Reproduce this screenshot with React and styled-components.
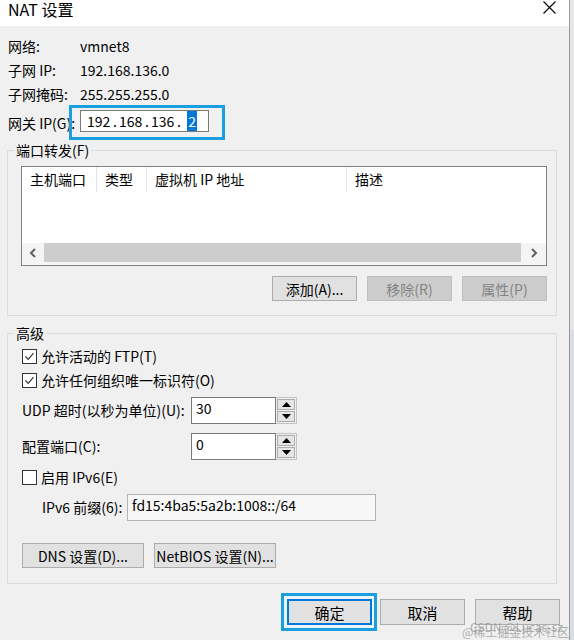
import React from "react";
import styled, { createGlobalStyle } from "styled-components";

const GlobalStyle = createGlobalStyle`
  * { box-sizing: border-box; }
  html, body { margin: 0; padding: 0; background: #f0f0f0; }
  body {
    font-family: "Noto Sans CJK SC", "Noto Sans", sans-serif;
    font-size: 14px;
    color: #000;
  }
`;

const Screen = styled.div`
  position: relative;
  display: flex;
  width: 574px;
  height: 640px;
  overflow: hidden;
`;

const Dialog = styled.div`
  width: 569px;
  height: 640px;
  background: #f0f0f0;
  display: flex;
  flex-direction: column;
`;

const Edge = styled.div`
  width: 1px;
  background: #9a9a9a;
`;

const Backdrop = styled.div`
  flex: 1;
  background: linear-gradient(#e6e6e6 0 330px, #dadde2 330px 640px);
`;

const TitleBar = styled.div`
  height: 26px;
  background: #fff;
  display: flex;
  align-items: flex-start;
  justify-content: space-between;
  padding: 1px 13px 0 8px;
`;

const Title = styled.div`
  font-size: 16px;
  line-height: 18px;
  margin-top: -1px;
`;

const Body = styled.div`
  padding: 8px 0 0 7px;
  display: flex;
  flex-direction: column;
`;

const InfoRow = styled.div`
  display: flex;
  align-items: center;
  height: ${(p) => p.$h || "24px"};
  padding-left: 1px;
  margin-top: ${(p) => p.$mt || "0"};
`;

const Label = styled.span`
  width: ${(p) => p.$w || "72px"};
  flex-shrink: 0;
  white-space: nowrap;
`;

const Highlight = styled.span`
  display: inline-flex;
  border: 3px solid #1a9fe0;
  padding: ${(p) => p.$pad};
  background: ${(p) => p.$bg || "transparent"};
  margin-right: ${(p) => p.$mr || "0"};
`;

const IpInput = styled.div`
  width: 129px;
  height: 22px;
  background: #fff;
  border: 1px solid #7a7a7a;
  display: flex;
  align-items: center;
  padding-left: 6px;
  font-size: 14px;
`;

const IpField = styled.span`
  width: ${(p) => p.$w || "22px"};
  text-align: ${(p) => p.$align || "left"};
`;

const IpDot = styled.span`
  width: 10px;
  padding-left: 4px;
`;

const Selected = styled.span`
  background: #0078d7;
  color: #fff;
  padding: 0 1px;
`;

const Group = styled.fieldset`
  margin: ${(p) => p.$mt || "0"} 0 0 0;
  padding: 0;
  width: 550px;
  min-width: 0;
  border: 1px solid #dcdcdc;
`;

const Legend = styled.legend`
  margin-left: 6px;
  padding: 0 2px;
  line-height: 18px;
`;

const GroupBody = styled.div`
  padding: ${(p) => p.$pad};
  display: flex;
  flex-direction: column;
`;

const ListBox = styled.div`
  width: 526px;
  height: 100px;
  background: #fff;
  border: 1px solid #828282;
  display: flex;
  flex-direction: column;
  justify-content: space-between;
`;

const Header = styled.div`
  display: flex;
  height: 25px;
`;

const HeaderCell = styled.div`
  width: ${(p) => p.$w};
  flex: ${(p) => (p.$w ? "none" : "1")};
  padding-left: 8px;
  line-height: 25px;
  border-right: ${(p) => (p.$w ? "1px solid #e5e5e5" : "none")};
  white-space: nowrap;
`;

const ScrollBar = styled.div`
  height: 22px;
  display: flex;
  background: #f4f4f4;
`;

const ScrollArrow = styled.div`
  width: ${(p) => p.$w};
  height: 19px;
  display: flex;
  align-items: center;
  justify-content: center;
`;

const Thumb = styled.div`
  flex: 1;
  height: 19px;
  background: #cdcdcd;
`;

const ButtonRow = styled.div`
  display: flex;
  justify-content: ${(p) => p.$justify || "flex-end"};
  gap: 10px;
  margin-top: ${(p) => p.$mt || "0"};
  align-items: center;
`;

const Button = styled.button`
  width: ${(p) => p.$w || "85px"};
  height: ${(p) => p.$h || "25px"};
  font-family: inherit;
  font-size: ${(p) => p.$fs || "14px"};
  padding: 0;
  background: ${(p) => (p.disabled ? "#cccccc" : "#e1e1e1")};
  color: ${(p) => (p.disabled ? "#838383" : "#000")};
  border: ${(p) =>
    p.$focused ? "2px solid #0078d7" : p.disabled ? "1px solid #bfbfbf" : "1px solid #adadad"};
  white-space: nowrap;
`;

const CheckRow = styled.label`
  display: flex;
  align-items: center;
  height: 24px;
  margin-top: ${(p) => p.$mt || "0"};
`;

const Box = styled.span`
  width: 15px;
  height: 15px;
  border: 1px solid #333;
  background: #fff;
  display: inline-flex;
  align-items: center;
  justify-content: center;
  margin-right: 4px;
`;

const FieldRow = styled.div`
  display: flex;
  align-items: flex-start;
  margin-top: ${(p) => p.$mt || "0"};
`;

const FieldLabel = styled.span`
  width: ${(p) => p.$w};
  padding-left: ${(p) => p.$indent || "0"};
  line-height: 27px;
  white-space: nowrap;
`;

const TextBox = styled.div`
  width: ${(p) => p.$w};
  height: 27px;
  padding: 0 4px;
  line-height: 20px;
  background: ${(p) => (p.$readOnly ? "#f7f7f7" : "#fff")};
  border: 1px solid ${(p) => (p.$readOnly ? "#b4b4b4" : "#7a7a7a")};
`;

const Spinner = styled.div`
  width: 21px;
  height: 27px;
  display: flex;
  flex-direction: column;
  gap: 1px;
  padding: 1px;
  background: #f0f0f0;
  border: 1px solid #c3c3c3;
  border-left: none;
`;

const SpinButton = styled.div`
  flex: 1;
  background: #e5e5e5;
  border: 1px solid #adadad;
  display: flex;
  align-items: center;
  justify-content: center;
`;

const Footer = styled.div`
  display: flex;
  justify-content: flex-end;
  align-items: center;
  margin-top: 9px;
  padding-right: 9px;
  gap: 10px;
`;

const Watermark = styled.div`
  position: absolute;
  left: ${(p) => p.$x}px;
  top: ${(p) => p.$y}px;
  font-size: 12px;
  line-height: 13px;
  color: rgba(150, 150, 150, 0.75);
  white-space: nowrap;
  pointer-events: none;
`;

const CloseIcon = () => (
  <svg width="13" height="13" viewBox="0 0 13 13">
    <path d="M0.5 0.5 L12.5 12.5 M12.5 0.5 L0.5 12.5" stroke="#000" strokeWidth="1.1" fill="none" />
  </svg>
);

const Check = () => (
  <svg width="11" height="11" viewBox="0 0 11 11">
    <polyline points="1.5,5.5 4.2,8.3 9.5,2.2" fill="none" stroke="#333" strokeWidth="1.2" />
  </svg>
);

const Chevron = ({ dir }) => (
  <svg width="8" height="10" viewBox="0 0 8 10">
    <polyline
      points={dir === "left" ? "6,1 2,5 6,9" : "2,1 6,5 2,9"}
      fill="none"
      stroke="#606060"
      strokeWidth="2"
    />
  </svg>
);

const Triangle = ({ up }) => (
  <svg width="9" height="5" viewBox="0 0 9 5">
    <polygon points={up ? "0,5 4.5,0 9,5" : "0,0 4.5,5 9,0"} fill="#000" />
  </svg>
);

function SpinBox({ value }) {
  return (
    <>
      <TextBox $w="85px">{value}</TextBox>
      <Spinner>
        <SpinButton>
          <Triangle up />
        </SpinButton>
        <SpinButton>
          <Triangle />
        </SpinButton>
      </Spinner>
    </>
  );
}

export default function App() {
  return (
    <>
      <GlobalStyle />
      <Screen>
        <Dialog>
          <TitleBar>
            <Title>NAT 设置</Title>
            <CloseIcon />
          </TitleBar>
          <Body>
            <InfoRow>
              <Label>网络:</Label>
              <span>vmnet8</span>
            </InfoRow>
            <InfoRow>
              <Label>子网 IP:</Label>
              <span>192.168.136.0</span>
            </InfoRow>
            <InfoRow>
              <Label>子网掩码:</Label>
              <span>255.255.255.0</span>
            </InfoRow>
            <InfoRow $h="35px" $mt="-1px">
              <Label $w="61px">网关 IP(G):</Label>
              <Highlight $pad="2px 13px 5px 8px">
                <IpInput>
                  <IpField>192</IpField>
                  <IpDot>.</IpDot>
                  <IpField>168</IpField>
                  <IpDot>.</IpDot>
                  <IpField>136</IpField>
                  <IpDot>.</IpDot>
                  <IpField $w="14px" $align="right">
                    <Selected>2</Selected>
                  </IpField>
                </IpInput>
              </Highlight>
            </InfoRow>

            <Group $mt="1px">
              <Legend>端口转发(F)</Legend>
              <GroupBody $pad="7px 9px 14px 13px">
                <ListBox>
                  <Header>
                    <HeaderCell $w="75px">主机端口</HeaderCell>
                    <HeaderCell $w="50px">类型</HeaderCell>
                    <HeaderCell $w="200px">虚拟机 IP 地址</HeaderCell>
                    <HeaderCell>描述</HeaderCell>
                  </Header>
                  <ScrollBar>
                    <ScrollArrow $w="22px">
                      <Chevron dir="left" />
                    </ScrollArrow>
                    <Thumb />
                    <ScrollArrow $w="25px">
                      <Chevron dir="right" />
                    </ScrollArrow>
                  </ScrollBar>
                </ListBox>
                <ButtonRow $mt="10px">
                  <Button>添加(A)...</Button>
                  <Button disabled>移除(R)</Button>
                  <Button disabled>属性(P)</Button>
                </ButtonRow>
              </GroupBody>
            </Group>

            <Group $mt="8px">
              <Legend>高级</Legend>
              <GroupBody $pad="2px 9px 15px 14px">
                <CheckRow>
                  <Box>
                    <Check />
                  </Box>
                  允许活动的 FTP(T)
                </CheckRow>
                <CheckRow>
                  <Box>
                    <Check />
                  </Box>
                  允许任何组织唯一标识符(O)
                </CheckRow>
                <FieldRow $mt="5px">
                  <FieldLabel $w="169px">UDP 超时(以秒为单位)(U):</FieldLabel>
                  <SpinBox value="30" />
                </FieldRow>
                <FieldRow $mt="9px">
                  <FieldLabel $w="169px">配置端口(C):</FieldLabel>
                  <SpinBox value="0" />
                </FieldRow>
                <CheckRow $mt="5px">
                  <Box />
                  启用 IPv6(E)
                </CheckRow>
                <FieldRow $mt="5px">
                  <FieldLabel $w="105px" $indent="20px">
                    IPv6 前缀(6):
                  </FieldLabel>
                  <TextBox $w="249px" $readOnly>
                    fd15:4ba5:5a2b:1008::/64
                  </TextBox>
                </FieldRow>
                <ButtonRow $justify="flex-start" $mt="22px">
                  <Button $w="122px">DNS 设置(D)...</Button>
                  <Button $w="122px">NetBIOS 设置(N)...</Button>
                </ButtonRow>
              </GroupBody>
            </Group>

            <Footer>
              <Highlight $pad="3px 2px 3px 3px" $bg="#e8f3fb" $mr="-7px">
                <Button $focused $h="26px" $fs="15px">
                  确定
                </Button>
              </Highlight>
              <Button $h="26px" $fs="15px">
                取消
              </Button>
              <Button $h="26px" $fs="15px">
                帮助
              </Button>
            </Footer>
          </Body>
        </Dialog>
        <Edge />
        <Backdrop />
        <Watermark $x={462} $y={625}>@稀土掘金技术社区</Watermark>
        <Watermark $x={470} $y={620}>CSDN @Lucas-sz</Watermark>
      </Screen>
    </>
  );
}
